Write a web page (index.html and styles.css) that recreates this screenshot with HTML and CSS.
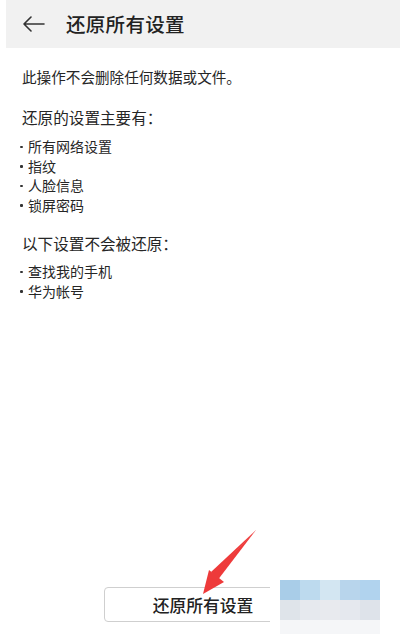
FILE: index.html
```html
<!DOCTYPE html>
<html lang="zh">
<head>
<meta charset="utf-8">
<link rel="stylesheet" href="styles.css">
</head>
<body>
<div class="page">
  <header class="topbar">
    <svg class="back" width="22" height="16" viewBox="0 0 22 16"><path d="M8 1 L1 8 L8 15 M1 8 H21" fill="none" stroke="#333" stroke-width="1.6" stroke-linecap="round" stroke-linejoin="round"/></svg>
    <h1 class="title">还原所有设置</h1>
  </header>
  <main class="content">
    <p class="note">此操作不会删除任何数据或文件。</p>
    <h2 class="sub first">还原的设置主要有：</h2>
    <ul class="list">
      <li>所有网络设置</li>
      <li>指纹</li>
      <li>人脸信息</li>
      <li>锁屏密码</li>
    </ul>
    <h2 class="sub second">以下设置不会被还原：</h2>
    <ul class="list second-list">
      <li>查找我的手机</li>
      <li>华为帐号</li>
    </ul>
  </main>
  <footer class="footer">
    <button class="reset">还原所有设置</button>
  </footer>
  <div class="mosaic">
    <div class="row r1"><span></span><span></span><span></span><span></span><span></span></div>
    <div class="row r2"><span></span><span></span><span></span><span></span><span></span></div>
    <div class="row r3"><span></span><span></span><span></span><span></span><span></span></div>
  </div>
  <svg class="arrow" width="70" height="70" viewBox="0 0 70 70">
    <path d="M66 2 L24 47 L21 44 Z" fill="#ee3a3a"/>
    <path d="M13 66 L19 42 L34 54 Z" fill="#ee3a3a"/>
    <path d="M66 2 L20 50 L27 53 Z" fill="#ee3a3a"/>
  </svg>
</div>
</body>
</html>
```
FILE: styles.css
```css
html, body {
  margin: 0;
  padding: 0;
  background: #ffffff;
}
body {
  font-family: "Noto Sans CJK SC", "Noto Sans", sans-serif;
  color: #222;
}
.page {
  position: relative;
  width: 400px;
  height: 634px;
  display: flex;
  flex-direction: column;
  overflow: hidden;
}
.topbar {
  margin-left: 6px;
  height: 48px;
  background: #f1f1f1;
  display: flex;
  align-items: center;
  flex-shrink: 0;
}
.back {
  margin-left: 17px;
  margin-top: 0;
}
.title {
  margin: 0 0 0 21px;
  font-size: 19.5px;
  font-weight: 500;
  color: #222;
  line-height: 26px;
  letter-spacing: 0.3px;
}
.content {
  padding-left: 22px;
  flex: 1;
}
.note {
  margin: 19px 0 0;
  font-size: 14.6px;
  line-height: 20px;
  color: #262626;
}
.sub {
  margin: 0;
  font-size: 15.6px;
  font-weight: 400;
  line-height: 22px;
  color: #262626;
}
.sub.first {
  margin-top: 19px;
}
.sub.second {
  margin-top: 17px;
}
.list {
  list-style: none;
  margin: 9px 0 0;
  padding: 0;
}
.second-list {
  margin-top: 8px;
}
.list li {
  position: relative;
  margin-left: 6px;
  font-size: 14px;
  line-height: 19.5px;
  color: #262626;
}
.list li::before {
  content: "";
  position: absolute;
  left: -8px;
  top: 8.5px;
  width: 2.5px;
  height: 2.5px;
  background: #333;
  border-radius: 1px;
}
.footer {
  display: flex;
  justify-content: center;
  padding-bottom: 12px;
}
.reset {
  width: 193px;
  height: 35px;
  border: 1px solid #cfcfcf;
  border-radius: 4px;
  background: #fff;
  font-family: "Noto Sans CJK SC", sans-serif;
  font-size: 16.8px;
  font-weight: 500;
  color: #222;
  padding: 0 0 0 6px;
}
.mosaic {
  position: absolute;
  left: 270px;
  top: 575px;
  width: 130px;
  height: 59px;
  background: #fff;
  padding: 5px 0 0 10px;
  box-sizing: border-box;
}
.row {
  display: flex;
  height: 20px;
}
.row span {
  width: 20px;
  height: 100%;
}
.row.r3 {
  height: 14px;
}
.r1 span:nth-child(1) { background: #a9cde8; }
.r1 span:nth-child(2) { background: #bddaee; }
.r1 span:nth-child(3) { background: #d3e6f2; }
.r1 span:nth-child(4) { background: #b8d5ec; }
.r1 span:nth-child(5) { background: #b1d3ee; }
.r2 span:nth-child(1) { background: #dfe4ea; }
.r2 span:nth-child(2) { background: #e6e9ee; }
.r2 span:nth-child(3) { background: #e8eaee; }
.r2 span:nth-child(4) { background: #e5e8ee; }
.r2 span:nth-child(5) { background: #dee3ea; }
.r3 span { background: #f5f6f8; }
.arrow {
  position: absolute;
  left: 190px;
  top: 528px;
}
```
